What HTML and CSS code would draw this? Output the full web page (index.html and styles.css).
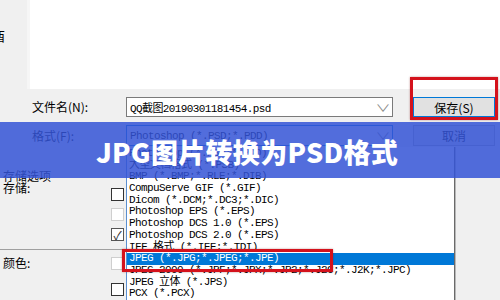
FILE: index.html
```html
<!DOCTYPE html>
<html lang="zh-CN">
<head>
    <meta charset="UTF-8">
    <meta name="viewport" content="width=device-width, initial-scale=1.0">
    <title>JPG图片转换为PSD格式</title>
    <link rel="stylesheet" href="styles.css">
</head>
<body>
    <div class="dialog">
        <div class="top">
            <div class="nav"><span class="cut">酉</span></div>
            <div class="pane"></div>
        </div>

        <div class="form">
            <div class="row">
                <label class="label">文件名(N):</label>
                <div class="field">
                    <span class="mono">QQ截图20190301181454.psd</span>
                    <span class="chev">&#x2228;</span>
                </div>
                <button class="btn default">保存(S)</button>
            </div>
            <div class="row">
                <label class="label">格式(F):</label>
                <div class="field focus">
                    <span class="mono">Photoshop (*.PSD;*.PDD)</span>
                    <span class="chev">&#x2228;</span>
                </div>
                <button class="btn">取消</button>
            </div>
        </div>

        <div class="options">
            <div class="opt-title">存储选项</div>
            <div class="opt-row"><span class="opt-label">存储:</span><span class="box"></span></div>
            <div class="opt-row"><span class="opt-label"></span><span class="box off"></span></div>
            <div class="opt-row"><span class="opt-label"></span><span class="box checked">&#x2713;</span></div>
            <hr class="sep">
            <div class="opt-row color"><span class="opt-label">颜色:</span><span class="box off"></span></div>
            <div class="opt-row"><span class="opt-label"></span><span class="box"></span></div>
            <hr class="sep">
        </div>
    </div>

    <!-- opened format list -->
    <ul class="list mono">
        <li>Photoshop (*.PSD;*.PDD)</li>
        <li>大型文档格式 (*.PSB)</li>
        <li>BMP (*.BMP;*.RLE;*.DIB)</li>
        <li>CompuServe GIF (*.GIF)</li>
        <li>Dicom (*.DCM;*.DC3;*.DIC)</li>
        <li>Photoshop EPS (*.EPS)</li>
        <li>Photoshop DCS 1.0 (*.EPS)</li>
        <li>Photoshop DCS 2.0 (*.EPS)</li>
        <li>IFF 格式 (*.IFF;*.TDI)</li>
        <li class="selected">JPEG (*.JPG;*.JPEG;*.JPE)</li>
        <li>JPEG 2000 (*.JPF;*.JPX;*.JP2;*.J2C;*.J2K;*.JPC)</li>
        <li>JPEG 立体 (*.JPS)</li>
        <li>PCX (*.PCX)</li>
    </ul>

    <div class="banner">JPG图片转换为PSD格式</div>

    <div class="mark mark-save"></div>
    <div class="mark mark-jpeg"></div>
</body>
</html>
```

FILE: styles.css
```css
body {
    margin: 0;
    width: 500px;
    height: 300px;
    overflow: hidden;
    position: relative;
    background: #f0f0f0;
    color: #000;
    font-family: "Noto Sans CJK SC", sans-serif;
    font-size: 12px;
}

.mono {
    font-family: "Liberation Mono", "Noto Sans CJK SC", monospace;
    font-size: 11px;
    letter-spacing: -0.6px;
}

/* top browser area */
.top {
    display: flex;
    height: 89px;
}

.nav {
    width: 27px;
    overflow: hidden;
    border-right: 3px solid #f6f6f6;
}

.cut {
    display: block;
    margin: 29px 0 0 -8px;
    font-size: 13px;
    line-height: 14px;
}

.pane {
    flex: 1;
    background: #fff;
}

/* name / format rows */
.form {
    display: flex;
    flex-direction: column;
    gap: 8px;
    padding: 8px 0 0 32px;
}

.row {
    display: flex;
    align-items: center;
    height: 20px;
}

.row + .row {
    height: 21px;
}

.label {
    width: 94px;
    line-height: 20px;
}

.field {
    display: flex;
    align-items: center;
    justify-content: space-between;
    box-sizing: border-box;
    width: 267px;
    height: 100%;
    padding: 0 4px 0 3px;
    background: #fff;
    border: 1px solid #7a7a7a;
}

.field.focus {
    border-color: #0078d7;
}

.chev {
    color: #8a8a8a;
    font-size: 10px;
    transform: scaleX(1.5);
}

.btn {
    box-sizing: border-box;
    width: 82px;
    height: 100%;
    margin-left: 20px;
    padding: 0;
    background: #e1e1e1;
    border: 1px solid #adadad;
    font-family: inherit;
    font-size: 12px;
    color: #000;
}

.btn.default {
    border-color: #0078d7;
}

/* left options */
.options {
    margin-top: 23px;
}

.opt-title {
    padding-left: 3px;
    line-height: 13px;
    height: 13px;
}

.opt-row {
    display: flex;
    height: 20px;
}

.opt-label {
    width: 108px;
    padding-left: 3px;
    line-height: 12px;
}

.box {
    box-sizing: border-box;
    width: 13px;
    height: 13px;
    margin-top: 6px;
    background: #fff;
    border: 1px solid #333;
    font-size: 12px;
    line-height: 11px;
    text-align: center;
    color: #333;
}

.box.off {
    border-color: #cfcfcf;
}

.box.checked {
    border-color: #555;
}

.sep {
    width: 124px;
    margin: 7px 0 0;
    border: 0;
    border-top: 1px solid #a0a0a0;
}

.opt-row.color {
    margin-top: 3px;
    height: 24px;
}

.opt-row.color .opt-label {
    line-height: 20px;
}

.opt-row.color .box {
    margin-top: 4px;
}

/* opened dropdown, overlays the form */
.list {
    position: absolute;
    left: 126px;
    top: 147px;
    width: 327px;
    height: 160px;
    margin: 0;
    padding: 1px 0 0;
    list-style: none;
    background: #fff;
    border-left: 1px solid #5b8fd0;
    border-right: 1px solid #6a6a6a;
    box-shadow: 1px 0 0 #b8b8b8;
}

.list li {
    height: 11.7px;
    line-height: 11.7px;
    padding-left: 2px;
    white-space: nowrap;
}

.list li.selected {
    background: #0078d7;
    color: #fff;
}

.banner {
    position: absolute;
    left: 0;
    right: 0;
    top: 122px;
    height: 56px;
    line-height: 60px;
    text-align: center;
    padding-right: 6px;
    background: rgba(52, 84, 214, 0.85);
    color: #fff;
    font-size: 27px;
    font-weight: 900;
    letter-spacing: 0.3px;
}

.mark {
    position: absolute;
    border: 3px solid #d4121c;
    box-shadow: 0 0 2px rgba(120, 0, 0, 0.4);
}

.mark-save {
    left: 410px;
    top: 77px;
    width: 82px;
    height: 37px;
}

.mark-jpeg {
    left: 122px;
    top: 249px;
    width: 205px;
    height: 17px;
}
```
